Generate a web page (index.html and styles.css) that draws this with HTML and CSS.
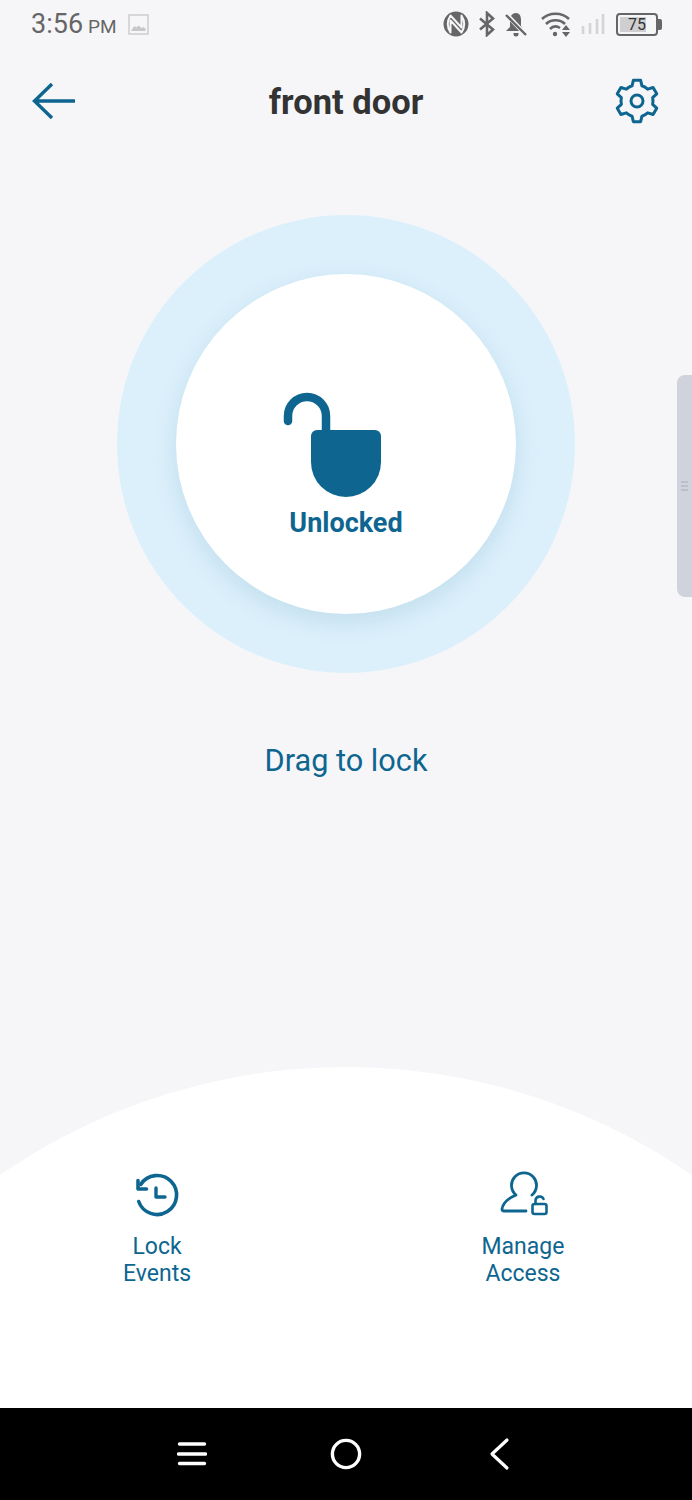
FILE: index.html
```html
<!DOCTYPE html>
<html lang="en">
<head>
    <meta charset="UTF-8">
    <meta name="viewport" content="width=device-width, initial-scale=1.0">
    <title>front door</title>
    <link rel="stylesheet" href="styles.css">
</head>
<body>
    <div class="screen">
        <!-- Status bar -->
        <div class="status-bar">
            <div class="status-left">
                <span class="time">3:56</span>
                <span class="ampm">PM</span>
                <svg class="img-icon" width="21" height="21" viewBox="0 0 21 21">
                    <rect x="1" y="1" width="19" height="19" fill="none" stroke="#d0d0d2" stroke-width="1.6"/>
                    <path d="M3.5 16 L6.5 12 L8.5 13.5 L10.5 11.5 L13.5 14 L15.5 13 L17.5 14.5 V17 H3.5 Z" fill="#c8c8ca"/>
                </svg>
            </div>
            <div class="status-right">
                <svg class="nfc" width="26" height="26" viewBox="0 0 26 26">
                    <circle cx="13" cy="13" r="12.5" fill="#666"/>
                    <path d="M7.5 4.5 C4 10 4 16 7.5 21.5 V9.5 L18.5 21.5 C22 16 22 10 18.5 4.5 V16.5 Z" fill="none" stroke="#f6f6f9" stroke-width="2" stroke-linejoin="round"/>
                </svg>
                <svg class="bt" width="18" height="26" viewBox="0 0 18 26">
                    <path d="M2 7.5 L15 18.5 L9 24 V2 L15 7.5 L2 18.5" fill="none" stroke="#666" stroke-width="2.6"/>
                </svg>
                <svg width="24" height="26" viewBox="0 0 24 26">
                    <path d="M12 2 C7.5 2 6 6 6 10 V16 L2 20 H20 L17 15 V9 C17 5 15.5 2 12 2 Z" fill="#666"/>
                    <path d="M9.5 22 H14.5 V23 A2.5 2.5 0 0 1 9.5 23 Z" fill="#666"/>
                    <path d="M2 3 L22 24" stroke="#f6f6f9" stroke-width="4.5"/>
                    <path d="M2 4 L22 24" stroke="#666" stroke-width="2.4"/>
                </svg>
                <svg class="wifi" width="30" height="26" viewBox="0 0 30 26">
                    <path d="M1 8 C8 1 21 1 28 8 M5 13 C10 8 19 8 24 13 M9 18 C12 15 16 15 19 17" fill="none" stroke="#666" stroke-width="2.6"/>
                    <circle cx="14" cy="23" r="2.2" fill="#666"/>
                    <path d="M25 14 L29 19 H21 Z M21 21 H29 L25 26 Z" fill="#666"/>
                </svg>
                <svg width="24" height="22" viewBox="0 0 24 22">
                    <path d="M2 13 V21 M9 10 V21 M16 6 V21 M22 1 V21" stroke="#d4d4d6" stroke-width="2.6"/>
                </svg>
                <div class="battery">
                    <div class="battery-body"><div class="battery-fill"></div><span>75</span></div>
                    <div class="battery-cap"></div>
                </div>
            </div>
        </div>

        <!-- Header -->
        <header class="app-header">
            <svg class="back-icon" width="44" height="38" viewBox="0 0 44 38">
                <path d="M43 19 H3 M20 2 L2.5 19 L20 36" fill="none" stroke="#0e6690" stroke-width="3.4"/>
            </svg>
            <h1>front door</h1>
            <svg class="gear-icon" width="48" height="48" viewBox="0 0 48 48">
                <path d="M19.06 8.8 L20.35 3.32 H27.65 L28.94 8.8 A16 16 0 0 1 34.69 12.12 L40.08 10.5 L43.74 16.82 L39.63 20.68 A16 16 0 0 1 39.63 27.32 L43.74 31.18 L40.08 37.5 L34.69 35.88 A16 16 0 0 1 28.94 39.2 L27.65 44.68 H20.35 L19.06 39.2 A16 16 0 0 1 13.31 35.88 L7.92 37.5 L4.26 31.18 L8.37 27.32 A16 16 0 0 1 8.37 20.68 L4.26 16.82 L7.92 10.5 L13.31 12.12 A16 16 0 0 1 19.06 8.8 Z" fill="none" stroke="#0e6690" stroke-width="3" stroke-linejoin="round"/>
                <circle cx="24" cy="24" r="6" fill="none" stroke="#0e6690" stroke-width="3"/>
            </svg>
        </header>

        <!-- Lock dial -->
        <main class="lock-area">
            <div class="dial-outer">
                <div class="dial-inner">
                    <svg class="lock-icon" width="105" height="110" viewBox="0 0 105 110">
                        <path d="M8 31 V26 A19 19 0 0 1 46 26 V44" fill="none" stroke="#0e6690" stroke-width="8.5" stroke-linecap="round"/>
                        <path d="M31 46 A6 6 0 0 1 37 40 H95 A6 6 0 0 1 101 46 V72 A35 35 0 0 1 31 72 Z" fill="#0e6690"/>
                    </svg>
                    <div class="lock-label">Unlocked</div>
                </div>
            </div>
            <p class="drag-hint">Drag to lock</p>
        </main>

        <!-- Bottom actions -->
        <section class="actions">
            <div class="action">
                <svg width="48" height="48" viewBox="0 0 48 48">
                    <path d="M7.7 13.4 A19.5 19.5 0 1 1 5.7 30.5" fill="none" stroke="#0e6690" stroke-width="3.6" stroke-linecap="round"/>
                    <path d="M5 9.5 V18 H13.5" fill="none" stroke="#0e6690" stroke-width="3.6" stroke-linecap="round" stroke-linejoin="round"/>
                    <path d="M23 17 V26 H32" fill="none" stroke="#0e6690" stroke-width="3.4" stroke-linecap="round" stroke-linejoin="round"/>
                </svg>
                <span>Lock<br>Events</span>
            </div>
            <div class="action">
                <svg width="54" height="48" viewBox="0 0 54 48">
                    <path d="M36 24 A12.5 12.5 0 1 0 20 24 C13 27 7 32 6 38 Q6 40 8 40 H30" fill="none" stroke="#0e6690" stroke-width="2.8" stroke-linecap="round" stroke-linejoin="round"/>
                    <rect x="36.5" y="33" width="14" height="10" rx="2" fill="none" stroke="#0e6690" stroke-width="2.6"/>
                    <path d="M39.5 33 V29.5 A4.2 4.2 0 0 1 47.5 28" fill="none" stroke="#0e6690" stroke-width="2.6" stroke-linecap="round"/>
                </svg>
                <span>Manage<br>Access</span>
            </div>
        </section>

        <!-- Android nav bar -->
        <nav class="nav-bar">
            <svg width="30" height="30" viewBox="0 0 30 30">
                <path d="M2.5 5 H27.5 M1.5 15 H28.5 M2.5 24.5 H27.5" stroke="#fff" stroke-width="3.4" stroke-linecap="round"/>
            </svg>
            <svg width="32" height="32" viewBox="0 0 32 32">
                <circle cx="16" cy="16" r="13.6" fill="none" stroke="#fff" stroke-width="3.4"/>
            </svg>
            <svg width="30" height="34" viewBox="0 0 30 34">
                <path d="M22 3 L7 17 L22 31" fill="none" stroke="#fff" stroke-width="3.2" stroke-linecap="round" stroke-linejoin="round"/>
            </svg>
        </nav>

        <div class="side-handle">
            <div class="grip"></div>
        </div>
    </div>
</body>
</html>
```

FILE: styles.css
```css
* {
    box-sizing: border-box;
}

body {
    margin: 0;
    padding: 0;
    font-family: Roboto, "Liberation Sans", sans-serif;
    background-color: #f6f6f9;
}

.screen {
    position: relative;
    display: flex;
    flex-direction: column;
    height: 1500px;
    overflow: hidden;
}

/* Status bar */
.status-bar {
    display: flex;
    justify-content: space-between;
    align-items: center;
    height: 48px;
    padding: 0 30px 0 31px;
    flex-shrink: 0;
}

.status-left {
    display: flex;
    align-items: baseline;
    color: #666;
}

.time {
    font-size: 27px;
}

.ampm {
    font-size: 19px;
    margin-left: 5px;
}

.img-icon {
    align-self: center;
    margin-left: 11px;
}

.status-right {
    display: flex;
    align-items: center;
    gap: 10px;
}

.nfc {
    margin-right: -1px;
}

.bt {
    margin-right: -2px;
}

.wifi {
    margin-left: 3px;
}

.battery {
    display: flex;
    align-items: center;
    margin-left: 1px;
}

.battery-body {
    position: relative;
    width: 42px;
    height: 23px;
    border: 2px solid #666;
    border-radius: 4px;
    padding: 2px;
    text-align: center;
}

.battery-fill {
    width: 75%;
    height: 100%;
    background-color: #cfcfd1;
}

.battery-body span {
    position: absolute;
    left: 0;
    right: 0;
    top: 0;
    font-size: 16px;
    line-height: 19px;
    color: #333;
}

.battery-cap {
    width: 4px;
    height: 11px;
    background-color: #666;
    border-radius: 0 2px 2px 0;
}

/* Header */
.app-header {
    display: flex;
    justify-content: space-between;
    align-items: center;
    height: 106px;
    padding: 0 31px 0 32px;
    flex-shrink: 0;
}

.app-header h1 {
    margin: 2px 0 0 0;
    font-size: 34.5px;
    font-weight: 700;
    color: #333;
}

.back-icon {
    margin-right: 3px;
}

/* Lock dial */
.lock-area {
    display: flex;
    flex-direction: column;
    align-items: center;
    flex: 1;
    padding-top: 61px;
}

.dial-outer {
    display: flex;
    justify-content: center;
    align-items: center;
    width: 458px;
    height: 458px;
    border-radius: 50%;
    background-color: #dcf0fb;
}

.dial-inner {
    display: flex;
    flex-direction: column;
    align-items: center;
    width: 340px;
    height: 340px;
    padding-top: 116px;
    border-radius: 50%;
    background-color: #fff;
    box-shadow: 0 8px 24px rgba(14, 102, 144, 0.13);
}

.lock-icon {
    margin-left: -27px;
}

.lock-label {
    margin-top: 7px;
    font-size: 27px;
    font-weight: 700;
    color: #0e6690;
}

.drag-hint {
    margin: 70px 0 0 0;
    font-size: 30.7px;
    color: #0e6690;
}

/* Bottom actions */
.actions {
    position: relative;
    display: flex;
    justify-content: space-between;
    flex-shrink: 0;
    height: 341px;
    padding: 104px 109px 0 97px;
    overflow: hidden;
}

.actions::before {
    content: '';
    position: absolute;
    left: -262px;
    top: 0;
    width: 1216px;
    height: 1216px;
    border-radius: 50%;
    background-color: #fff;
}

.action {
    position: relative;
    display: flex;
    flex-direction: column;
    align-items: center;
    width: 120px;
    color: #0e6690;
    font-size: 23px;
    line-height: 27px;
    text-align: center;
}

.action span {
    margin-top: 14px;
}

/* Nav bar */
.nav-bar {
    display: flex;
    justify-content: center;
    align-items: center;
    gap: 123px;
    height: 92px;
    flex-shrink: 0;
    background-color: #000;
}

/* Side handle */
.side-handle {
    position: absolute;
    right: 0;
    top: 375px;
    display: flex;
    justify-content: center;
    align-items: center;
    width: 15px;
    height: 222px;
    background-color: #d0d3db;
    border-radius: 8px 0 0 8px;
}

.grip {
    width: 7px;
    height: 10px;
    background: repeating-linear-gradient(#bcc0ca 0, #bcc0ca 2px, transparent 2px, transparent 4px);
}
```
